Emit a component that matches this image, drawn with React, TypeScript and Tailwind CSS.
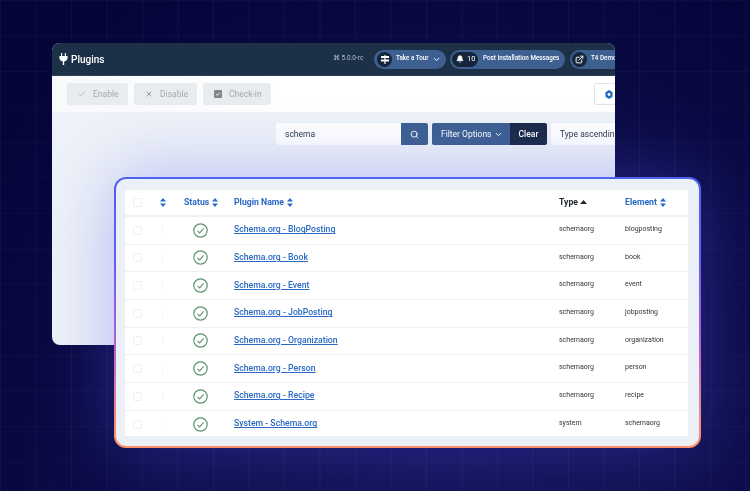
import { Bell, Check, ChevronDown, ExternalLink, Search, X } from 'lucide-react';

const rows = [
  { name: 'Schema.org - BlogPosting', type: 'schemaorg', element: 'blogposting' },
  { name: 'Schema.org - Book', type: 'schemaorg', element: 'book' },
  { name: 'Schema.org - Event', type: 'schemaorg', element: 'event' },
  { name: 'Schema.org - JobPosting', type: 'schemaorg', element: 'jobposting' },
  { name: 'Schema.org - Organization', type: 'schemaorg', element: 'organization' },
  { name: 'Schema.org - Person', type: 'schemaorg', element: 'person' },
  { name: 'Schema.org - Recipe', type: 'schemaorg', element: 'recipe' },
  { name: 'System - Schema.org', type: 'system', element: 'schemaorg' },
];

function SortIcon() {
  return (
    <svg width="6" height="9" viewBox="0 0 6 9" className="shrink-0 fill-[#2a69c4]">
      <path d="M3 0 L6 3.6 H0 Z M3 9 L0 5.4 H6 Z" />
    </svg>
  );
}

function StatusIcon() {
  return (
    <svg width="15" height="15" viewBox="0 0 15 15" fill="none" className="stroke-[#5c9470]">
      <circle cx="7.5" cy="7.5" r="6.7" strokeWidth="1.2" />
      <path d="M4.5 7.8 L6.7 9.9 L10.6 5.4" strokeWidth="1.1" />
    </svg>
  );
}

function ToolButton({ icon, label, width }: { icon: React.ReactNode; label: string; width: string }) {
  return (
    <div className={`flex h-[22px] shrink-0 items-center gap-[7px] rounded-[2px] bg-[#e9ecef] pl-[11px] text-[8.5px] whitespace-nowrap text-[#a3a9b0] ${width}`}>
      {icon}
      <span>{label}</span>
    </div>
  );
}

export default function App() {
  return (
    <div className="relative h-[491px] w-[750px] overflow-hidden bg-[#05053a] font-['Roboto',sans-serif] blur-[0.3px]">
      {/* background glow and grid */}
      <div className="absolute inset-0 bg-[radial-gradient(ellipse_at_60%_100%,#14145a_0%,#0e0e4c_45%,#05053a_85%)]" />
      <div className="absolute inset-0 bg-[linear-gradient(to_right,rgba(255,255,255,0.04)_1px,transparent_1px),linear-gradient(to_bottom,rgba(255,255,255,0.025)_1px,transparent_1px)] bg-[size:35.5px_35.5px]" />

      {/* back window */}
      <div className="absolute left-[52px] top-[43px] flex h-[302px] w-[563px] flex-col overflow-hidden rounded-[8px] rounded-br-none bg-[#eef2f8]">
        <div className="flex h-[33px] shrink-0 items-center border-b border-[#2e4058] bg-[#1c3047] pl-[7px] text-white">
          <svg width="9" height="12" viewBox="0 0 9 12" className="shrink-0 fill-white">
            <path d="M2 0h1.2v3H2zM5.8 0H7v3H5.8zM0.4 3h8.2v1.8c0 2-1.3 3.4-3.4 3.6V12H3.8V8.4C1.7 8.2 0.4 6.800 0.4 4.800z" />
          </svg>
          <span className="ml-[3px] w-[262px] shrink-0 text-[10px] font-medium">Plugins</span>
          <span className="w-[41px] shrink-0 whitespace-nowrap text-[6.5px] text-[#b4bfcc]">⌘ 5.0.0-rc</span>
          <div className="flex h-[19px] w-[72px] shrink-0 items-center rounded-full bg-[#3d6091] pl-[3px]">
            <span className="flex h-[15px] w-[15px] shrink-0 items-center justify-center rounded-full bg-[#14263c]">
              <svg width="8" height="9" viewBox="0 0 8 9" className="fill-white">
                <path d="M0 1h8v2H0zM0 4.4h8v2H0zM3.4 0h1.200v9H3.400z" />
              </svg>
            </span>
            <span className="ml-[4px] whitespace-nowrap text-[6.3px] font-medium">Take a Tour</span>
            <ChevronDown size={9} strokeWidth={2.5} className="ml-[3px] shrink-0" />
          </div>
          <div className="ml-[4px] flex h-[19px] w-[115px] shrink-0 items-center rounded-full bg-[#3d6091] pl-[2px]">
            <span className="flex h-[15px] w-[26px] shrink-0 items-center gap-[3px] rounded-full bg-[#14263c] pl-[4px]">
              <Bell size={8} fill="white" className="shrink-0" />
              <span className="text-[7.5px]">10</span>
            </span>
            <span className="ml-[5px] whitespace-nowrap text-[6.3px] font-medium">Post Installation Messages</span>
          </div>
          <div className="ml-[5px] flex h-[19px] w-[70px] shrink-0 items-center rounded-full bg-[#3d6091] pl-[2px]">
            <span className="flex h-[15px] w-[15px] shrink-0 items-center justify-center rounded-full bg-[#14263c]">
              <ExternalLink size={9} strokeWidth={2.5} />
            </span>
            <span className="ml-[4px] whitespace-nowrap text-[6.3px] font-medium">T4 Demo</span>
          </div>
        </div>

        <div className="flex h-[36px] shrink-0 items-center gap-[6px] bg-[linear-gradient(90deg,#f8f9fb,#ffffff_40%)] pl-[15px]">
          <ToolButton width="w-[61px]" icon={<Check size={8} className="shrink-0 text-[#98a0a8]" />} label="Enable" />
          <ToolButton width="w-[63px]" icon={<X size={8} strokeWidth={2.5} className="shrink-0 text-[#7e868e]" />} label="Disable" />
          <ToolButton
            width="w-[68px]"
            icon={
              <svg width="8" height="8" viewBox="0 0 8 8" className="shrink-0">
                <rect width="8" height="8" rx="1" className="fill-[#7e868e]" />
                <path d="M2 4 L3.5 5.4 L6 2.6" fill="none" strokeWidth="1" className="stroke-[#e9ecef]" />
              </svg>
            }
            label="Check-in"
          />
          <div className="ml-[317px] flex h-[22px] w-[40px] shrink-0 items-center rounded-[2px] border border-[#dfe3ea] bg-white pl-[10px]">
            <svg width="8" height="9" viewBox="0 0 8 9" className="shrink-0">
              <path d="M4 0 L7.6 2.2 V6.8 L4 9 L0.4 6.8 V2.2 Z" className="fill-[#2a69c4]" />
              <circle cx="4" cy="4.5" r="1.4" className="fill-white" />
            </svg>
          </div>
        </div>

        <div className="flex items-center pl-[224px] pt-[11px]">
          <div className="flex h-[22px] w-[125px] shrink-0 items-center rounded-l-[2px] bg-white pl-[9px] text-[8.5px] text-[#2f3a45]">schema</div>
          <div className="flex h-[22px] w-[27px] shrink-0 items-center justify-center rounded-r-[2px] bg-[#3d6091] text-white">
            <Search size={9} strokeWidth={2.5} />
          </div>
          <div className="ml-[4px] flex h-[22px] w-[78px] shrink-0 items-center gap-[2px] rounded-l-[2px] bg-[#3d6091] pl-[9px] text-[8.5px] whitespace-nowrap text-white">
            Filter Options
            <ChevronDown size={9} strokeWidth={2.5} className="shrink-0" />
          </div>
          <div className="flex h-[22px] w-[37px] shrink-0 items-center justify-center rounded-r-[2px] bg-[#1b2a47] text-[8.5px] font-medium text-white">Clear</div>
          <div className="ml-[4px] flex h-[22px] w-[100px] shrink-0 items-center whitespace-nowrap rounded-[2px] bg-white pl-[9px] text-[8.5px] text-[#2f3a45]">Type ascending</div>
        </div>
      </div>

      {/* front card with gradient border */}
      <div className="absolute left-[114px] top-[177px] h-[271px] w-[587px] rounded-[12px] bg-[linear-gradient(180deg,#4d63ef_0%,#6a5cf0_30%,#b35fd6_62%,#f08a80_88%,#ff9166_100%)] p-[2px] shadow-[0_0_70px_rgba(75,85,235,0.38)]">
        <div className="h-full rounded-[10px] bg-[#ebf0f6] pl-[9px] pr-[11px] pt-[11px]">
          <div className="h-[246px] overflow-hidden bg-white">
            <div className="grid h-[27px] grid-cols-[26px_25px_50px_325px_66px_1fr] items-center border-b-2 border-[#eef1f4] pl-[8px] text-[8.7px] font-bold text-[#2a69c4]">
              <span className="h-[9px] w-[9px] rounded-[2px] border border-[#eceef1]" />
              <span className="pl-[1px]"><SortIcon /></span>
              <span className="flex items-center gap-[3px]">Status <SortIcon /></span>
              <span className="flex items-center gap-[3px]">Plugin Name <SortIcon /></span>
              <span className="flex items-center gap-[2px] text-[#24292e]">
                Type
                <svg width="7" height="4" viewBox="0 0 7 4" className="fill-[#24292e]"><path d="M3.5 0 L7 4 H0 Z" /></svg>
              </span>
              <span className="flex items-center gap-[3px]">Element <SortIcon /></span>
            </div>
            {rows.map((row, i) => (
              <div
                key={row.name}
                className={`grid h-[27.67px] grid-cols-[26px_25px_50px_325px_66px_1fr] items-center pl-[8px] ${i < rows.length - 1 ? 'border-b border-[#eef1f4]' : ''}`}
              >
                <span className="h-[9px] w-[9px] rounded-[2px] border border-[#eef0f2]" />
                <span className="ml-[3px] h-[6px] w-px bg-[#f0f2f4]" />
                <span className="flex pl-[9px]"><StatusIcon /></span>
                <a className="pb-[1px] text-[8.7px] font-medium text-[#2a69c4] underline">{row.name}</a>
                <span className="pb-[2px] text-[7px] text-[#30363c]">{row.type}</span>
                <span className="pb-[2px] text-[7px] text-[#30363c]">{row.element}</span>
              </div>
            ))}
          </div>
        </div>
      </div>
    </div>
  );
}
